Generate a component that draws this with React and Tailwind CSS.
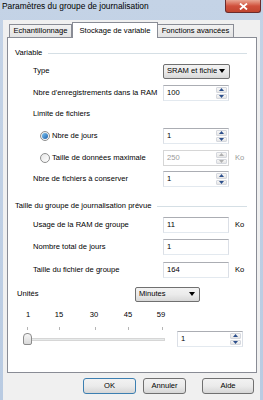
import React from "react";

function Arrow({ up, disabled }) {
  return (
    <svg width="5" height="3" viewBox="0 0 5 3">
      <path d={up ? "M0 3 L2.5 0 L5 3 Z" : "M0 0 L2.5 3 L5 0 Z"} fill={disabled ? "#b0b0b0" : "#2c4f8c"} />
    </svg>
  );
}

function Spin({ value, disabled, w = "w-[66px]" }) {
  return (
    <div
      className={`flex h-[16px] ${w} border bg-white ${
        disabled ? "border-[#d6d6d6]" : "border-[#abadb3] border-x-[#dbdfe6] border-b-[#e3e9ef]"
      }`}
    >
      <div className={`flex flex-1 items-center pl-[3px] ${disabled ? "text-[#9a9a9a]" : "text-black"}`}>{value}</div>
      <div className="flex w-[12px] flex-col gap-[1px] py-[1px] pr-[1px]">
        <div className="flex flex-1 items-center justify-center rounded-[1px] border border-[#d5d8de] bg-gradient-to-b from-[#f7f7f7] to-[#e6e6e6]">
          <Arrow up disabled={disabled} />
        </div>
        <div className="flex flex-1 items-center justify-center rounded-[1px] border border-[#d5d8de] bg-gradient-to-b from-[#f7f7f7] to-[#e6e6e6]">
          <Arrow disabled={disabled} />
        </div>
      </div>
    </div>
  );
}

function TextBox({ value }) {
  return (
    <div className="flex h-[16px] w-[66px] items-center border border-[#abadb3] border-x-[#dbdfe6] border-b-[#e3e9ef] bg-white pl-[3px]">
      {value}
    </div>
  );
}

function Combo({ value, w }) {
  return (
    <div
      className={`flex h-[15px] ${w} items-center overflow-hidden rounded-[2px] border border-[#707070] bg-gradient-to-b from-[#f2f2f2] via-[#ebebeb] to-[#d8d8d8] pl-[3px] pr-[4px]`}
    >
      <span className="flex-1 overflow-hidden whitespace-nowrap">{value}</span>
      <svg width="6" height="4" viewBox="0 0 6 4" className="ml-[2px] shrink-0">
        <path d="M0 0 L6 0 L3 4 Z" fill="#000" />
      </svg>
    </div>
  );
}

function Radio({ checked }) {
  return (
    <div className="flex h-[10px] w-[10px] items-center justify-center rounded-full border border-[#8e8f8f] bg-gradient-to-br from-[#e6e6e6] to-[#ffffff]">
      {checked && <div className="h-[6px] w-[6px] rounded-full bg-gradient-to-br from-[#7fc6f4] to-[#1a5fa8]" />}
    </div>
  );
}

function Header({ children, mt }) {
  return (
    <div className={`flex h-[12px] items-center pl-[7px] pr-[9px] ${mt}`}>
      <span className="whitespace-nowrap">{children}</span>
      <div className="ml-[6px] h-[1px] flex-1 bg-[#d5dfe5]" />
    </div>
  );
}

function Btn({ children, w, def }) {
  return (
    <div
      className={`flex h-[16px] ${w} items-center justify-center rounded-[3px] border ${
        def ? "border-[#3c7fb1]" : "border-[#707070]"
      } bg-gradient-to-b from-[#f2f2f2] via-[#ebebeb] to-[#d6d6d6]`}
    >
      {children}
    </div>
  );
}

export default function App() {
  return (
    <div className="relative h-[400px] w-[263px] overflow-hidden bg-gradient-to-b from-[#c4d3e6] to-[#b9cbe2] font-['Liberation_Sans',Arial,sans-serif] text-[7.6px] leading-none text-black">
      {/* Title bar */}
      <div className="flex h-[20px] items-start">
        <div className="mt-[2px] pl-[2px] text-[8.4px] leading-[9px] text-black">
          Paramètres du groupe de journalisation
        </div>
        <div className="ml-auto mr-[2px] flex h-[13px] w-[36px] items-center justify-center rounded-b-[3px] border border-t-0 border-[#6b2b2b] bg-gradient-to-b from-[#e8a593] via-[#d0503c] to-[#c0452f]">
          <svg width="9" height="7" viewBox="0 0 9 7">
            <path d="M1 0.5 L8 6.5 M8 0.5 L1 6.5" stroke="#fff" strokeWidth="1.8" />
          </svg>
        </div>
      </div>
      {/* Client area */}
      <div className="mx-[3px] flex h-[380px] flex-col bg-[#f0f0f0] pl-[4px] pr-[2px]">
        {/* Tabs */}
        <div className="flex h-[17px] items-end pl-[2px]">
          <div className="flex h-[13px] w-[63px] items-center justify-center border border-b-0 border-[#898c95] bg-gradient-to-b from-[#f2f2f2] to-[#e3e3e3]">
            Echantillonnage
          </div>
          <div className="relative z-10 -mb-[1px] flex h-[16px] w-[86px] items-start justify-center border border-b-0 border-[#898c95] bg-white pt-[4px]">
            Stockage de variable
          </div>
          <div className="flex h-[13px] w-[76px] items-center justify-center border border-b-0 border-l-0 border-[#898c95] bg-gradient-to-b from-[#f2f2f2] to-[#e3e3e3]">
            Fonctions avancées
          </div>
        </div>
        {/* Panel */}
        <div className="flex h-[336px] w-[250px] flex-col border border-[#898c95] bg-white">
          <Header mt="mt-[9px]">Variable</Header>

          <div className="mt-[4px] flex h-[16px] items-center pl-[25px]">
            <span className="w-[130px]">Type</span>
            <Combo value="SRAM et fichiers" w="w-[67px]" />
          </div>

          <div className="mt-[6px] flex h-[16px] items-center pl-[25px]">
            <span className="w-[130px] whitespace-nowrap">Nbre d'enregistrements dans la RAM</span>
            <Spin value="100" />
          </div>

          <div className="mt-[7px] flex h-[12px] items-center pl-[25px]">Limite de fichiers</div>

          <div className="mt-[8px] flex h-[16px] items-center pl-[32px]">
            <div className="flex w-[123px] items-center gap-[2px]">
              <Radio checked />
              <span>Nbre de jours</span>
            </div>
            <Spin value="1" />
          </div>

          <div className="mt-[6px] flex h-[16px] items-center pl-[32px]">
            <div className="flex w-[123px] items-center gap-[2px]">
              <Radio />
              <span>Taille de données maximale</span>
            </div>
            <Spin value="250" disabled />
            <span className="ml-[6px] text-[#9a9a9a]">Ko</span>
          </div>

          <div className="mt-[5px] flex h-[16px] items-center pl-[25px]">
            <span className="w-[130px]">Nbre de fichiers à conserver</span>
            <Spin value="1" />
          </div>

          <Header mt="mt-[13px]">Taille du groupe de journalisation prévue</Header>

          <div className="mt-[5px] flex h-[16px] items-center pl-[25px]">
            <span className="w-[130px]">Usage de la RAM de groupe</span>
            <TextBox value="11" />
            <span className="ml-[6px]">Ko</span>
          </div>

          <div className="mt-[6px] flex h-[16px] items-center pl-[25px]">
            <span className="w-[130px]">Nombre total de jours</span>
            <TextBox value="1" />
          </div>

          <div className="mt-[7px] flex h-[16px] items-center pl-[25px]">
            <span className="w-[130px]">Taille du fichier de groupe</span>
            <TextBox value="164" />
            <span className="ml-[6px]">Ko</span>
          </div>

          <div className="mt-[8px] flex h-[16px] items-center pl-[9px]">
            <span className="w-[118px]">Unités</span>
            <Combo value="Minutes" w="w-[65px]" />
          </div>

          {/* tick labels */}
          <div className="relative mt-[8px] h-[10px]">
            <span className="absolute left-[17px] top-[1px] w-[6px] text-center">1</span>
            <span className="absolute left-[45px] top-[1px] w-[12px] text-center">15</span>
            <span className="absolute left-[80px] top-[1px] w-[12px] text-center">30</span>
            <span className="absolute left-[114px] top-[1px] w-[12px] text-center">45</span>
            <span className="absolute left-[147px] top-[1px] w-[12px] text-center">59</span>
          </div>
          <div className="relative mt-[7px] h-[3px]">
            <div className="absolute left-[19px] h-[3px] w-[1px] bg-[#b5b5b5]" />
            <div className="absolute left-[51px] h-[3px] w-[1px] bg-[#b5b5b5]" />
            <div className="absolute left-[87px] h-[3px] w-[1px] bg-[#b5b5b5]" />
            <div className="absolute left-[120px] h-[3px] w-[1px] bg-[#b5b5b5]" />
            <div className="absolute left-[154px] h-[3px] w-[1px] bg-[#b5b5b5]" />
          </div>
          {/* slider row */}
          <div className="mt-[1px] flex h-[16px] items-center pl-[15px]">
            <div className="relative flex h-[14px] w-[142px] items-center">
              <div className="ml-[4px] h-[3px] flex-1 border border-[#d6d6d6] bg-[#e7eaea]" />
              <div className="absolute left-0 top-[1px] h-[12px] w-[9px] rounded-[2px] rounded-t-[4px] border border-[#8b8b8b] bg-gradient-to-b from-[#f6f6f6] to-[#d9d9d9]" />
            </div>
            <div className="ml-[12px]">
              <Spin value="1" w="w-[66px]" />
            </div>
          </div>
        </div>
        {/* Buttons */}
        <div className="mt-[5px] flex pl-[76px]">
          <Btn w="w-[53px]" def>OK</Btn>
          <div className="ml-[7px]">
            <Btn w="w-[43px]">Annuler</Btn>
          </div>
          <div className="ml-[16px]">
            <Btn w="w-[52px]">Aide</Btn>
          </div>
        </div>
      </div>
    </div>
  );
}
